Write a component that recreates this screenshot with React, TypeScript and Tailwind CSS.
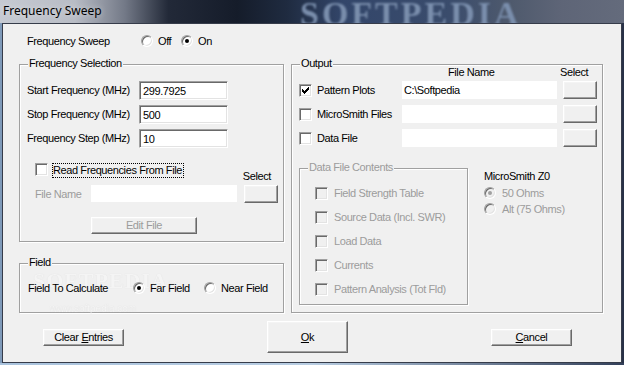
import React from "react";

const sunken =
  "border border-t-[#a0a0a0] border-l-[#a0a0a0] border-r-white border-b-white shadow-[inset_1px_1px_0_#696969,inset_-1px_-1px_0_#e3e3e3]";
const raised =
  "border border-t-white border-l-white border-r-[#696969] border-b-[#696969] shadow-[inset_-1px_-1px_0_#a0a0a0,inset_1px_1px_0_#f4f4f4] bg-[#f0f0f0]";
const grayText = "text-[#9c9c9c]";

function Check({ checked = false, disabled = false }: { checked?: boolean; disabled?: boolean }) {
  return (
    <span
      className={`inline-flex shrink-0 w-[13px] h-[13px] items-center justify-center ${sunken} ${
        disabled ? "bg-[#f0f0f0]" : "bg-white"
      }`}
    >
      {checked && (
        <svg width="7" height="7" viewBox="0 0 7 7" shapeRendering="crispEdges">
          <path d="M0 2h1v3h-1zM1 3h1v3h-1zM2 4h1v3h-1zM3 3h1v3h-1zM4 2h1v3h-1zM5 1h1v3h-1zM6 0h1v3h-1z" fill="#000" />
        </svg>
      )}
    </span>
  );
}

function Radio({ checked = false, disabled = false }: { checked?: boolean; disabled?: boolean }) {
  return (
    <span
      className={`inline-flex shrink-0 w-[12px] h-[12px] rounded-full items-center justify-center border border-t-[#a0a0a0] border-l-[#a0a0a0] border-r-white border-b-white shadow-[inset_1px_1px_0_#696969,inset_-1px_-1px_0_#e3e3e3] ${
        disabled ? "bg-[#f0f0f0]" : "bg-white"
      }`}
    >
      {checked && (
        <span className={`w-[4px] h-[4px] rounded-full ${disabled ? "bg-[#a0a0a0]" : "bg-black"}`} />
      )}
    </span>
  );
}

function Group({
  label,
  className = "",
  children,
  disabled = false,
}: {
  label: string;
  className?: string;
  children?: React.ReactNode;
  disabled?: boolean;
}) {
  return (
    <div
      className={`relative border border-[#a0a0a0] shadow-[1px_1px_0_#ffffff,inset_1px_1px_0_#ffffff] ${className}`}
    >
      <span
        className={`absolute -top-[8px] left-[8px] bg-[#f0f0f0] px-[1px] leading-[13px] ${disabled ? grayText : ""}`}
      >
        {label}
      </span>
      {children}
    </div>
  );
}

export default function App() {
  return (
    <div className="w-[624px] h-[365px] overflow-hidden flex flex-col bg-[#a9bfd6] font-['Liberation_Sans',Arial,sans-serif] text-[11px] tracking-[-0.4px] leading-[13px] text-black">
      {/* Title bar */}
      <div className="relative h-[23px] shrink-0 overflow-hidden bg-[linear-gradient(90deg,#c6cad2_0%,#b8bcc5_12%,#737987_20%,#222938_27%,#151c2a_38%,#1f2b40_46%,#33466a_55%,#3a4c6c_72%,#4f5a6d_82%,#5e6577_90%,#646b7c_100%)]">
        <span className="absolute left-[300px] -top-[5px] font-['Liberation_Serif',serif] font-bold text-[34px] leading-[38px] tracking-[3px] text-[#7a8eac] blur-[1.2px]">
          SOFTPEDIA
        </span>
        <div className="relative flex h-full items-center pl-[3px] pb-[2px] font-['Noto_Sans',sans-serif] text-[12px] tracking-normal text-black [text-shadow:0_0_6px_rgba(255,255,255,0.6)]">
          Frequency Sweep
        </div>
      </div>

      <div className="flex h-[340px] shrink-0">
        <div className="w-[2px] bg-[#7f9ab9]" />
        <div className="w-[620px] h-[340px] border border-[#363c4a] bg-[#f0f0f0] flex flex-col">
          {/* Top row */}
          <div className="mt-[9px] h-[16px] flex items-center pl-[24px]">
            <span className="w-[114px]">Frequency Sweep</span>
            <div className="w-[40px] flex items-center">
              <Radio />
              <span className="ml-[5px]">Off</span>
            </div>
            <div className="flex items-center">
              <Radio checked />
              <span className="ml-[5px]">On</span>
            </div>
          </div>

          {/* Main area */}
          <div className="mt-[15px] flex pl-[16px] gap-[7px]">
            {/* Left column */}
            <div className="w-[265px] flex flex-col">
              <Group label="Frequency Selection" className="h-[178px] pt-[16px] pl-[7px]">
                {[
                  ["Start Frequency (MHz)", "299.7925"],
                  ["Stop Frequency (MHz)", "500"],
                  ["Frequency Step (MHz)", "10"],
                ].map(([l, v], i) => (
                  <div key={l} className={`flex items-center h-[19px] ${i > 0 ? "mt-[5px]" : ""}`}>
                    <span className="w-[112px]">{l}</span>
                    <div className={`w-[89px] h-[19px] bg-white flex items-center pl-[3px] pt-[2px] ${sunken}`}>
                      {v}
                    </div>
                  </div>
                ))}
                <div className="mt-[15px] h-[20px] flex items-start">
                  <div className="ml-[8px] flex items-start">
                    <Check />
                    <span className="ml-[4px] border border-dotted border-black h-[15px] leading-[13px] pr-[1px]">
                      Read Frequencies From File
                    </span>
                  </div>
                  <span className="ml-auto mr-[12px] self-end">Select</span>
                </div>
                <div className="mt-[2px] h-[18px] flex items-start">
                  <span className={`ml-[8px] w-[56px] self-center ${grayText}`}>File Name</span>
                  <div className="w-[146px] h-[17px] bg-white" />
                  <div className={`ml-[7px] w-[34px] h-[18px] ${raised}`} />
                </div>
                <div className={`mt-[14px] ml-[64px] w-[106px] h-[17px] flex items-center justify-center ${raised} ${grayText}`}>
                  Edit File
                </div>
              </Group>

              <Group label="Field" className="mt-[21px] h-[50px] pt-[16px] pl-[8px]">
                <span className="absolute left-[13px] top-[5px] font-['Liberation_Serif',serif] font-bold text-[22px] leading-[24px] tracking-[1px] text-[#f9f9f9] opacity-50 [text-shadow:0_0_1px_#c4c4c4]">
                  SOFTPEDIA<sup className="text-[7px] font-normal">TM</sup>
                </span>
                <span className="absolute left-[30px] top-[38px] text-[10px] tracking-normal text-[#f9f9f9] opacity-60 [text-shadow:0_0_1px_#c4c4c4]">
                  www.softpedia.com
                </span>
                <div className="relative z-10 h-[16px] flex items-center">
                  <span className="w-[105px]">Field To Calculate</span>
                  <div className="w-[71px] flex items-center">
                    <Radio checked />
                    <span className="ml-[5px]">Far Field</span>
                  </div>
                  <div className="flex items-center">
                    <Radio />
                    <span className="ml-[5px]">Near Field</span>
                  </div>
                </div>
              </Group>
            </div>

            {/* Right column */}
            <Group label="Output" className="w-[312px] h-[249px] flex flex-col">
              <div className="mt-[1px] h-[13px] flex pl-[156px]">
                <span className="w-[112px]">File Name</span>
                <span>Select</span>
              </div>
              {[
                ["Pattern Plots", "C:\\Softpedia", true],
                ["MicroSmith Files", "", false],
                ["Data File", "", false],
              ].map(([l, v, c], i) => (
                <div
                  key={l as string}
                  className={`flex items-center h-[18px] pl-[7px] ${i === 0 ? "mt-[2px]" : "mt-[6px]"}`}
                >
                  <div className="w-[103px] flex items-center">
                    <Check checked={c as boolean} />
                    <span className="ml-[5px]">{l as string}</span>
                  </div>
                  <div className="w-[155px] h-[18px] bg-white flex items-center pl-[2px]">{v as string}</div>
                  <div className={`ml-[6px] w-[34px] h-[18px] ${raised}`} />
                </div>
              ))}
              <div className="mt-[21px] flex pl-[7px]">
                <Group label="Data File Contents" disabled className="w-[169px] h-[137px] pt-[16px] pl-[15px] flex flex-col gap-[8px]">
                  {[
                    "Field Strength Table",
                    "Source Data (Incl. SWR)",
                    "Load Data",
                    "Currents",
                    "Pattern Analysis (Tot Fld)",
                  ].map((t) => (
                    <div key={t} className="h-[16px] flex items-center">
                      <Check disabled />
                      <span className={`ml-[6px] ${grayText}`}>{t}</span>
                    </div>
                  ))}
                </Group>
                <div className="ml-[16px] flex flex-col">
                  <span className="mt-[2px]">MicroSmith Z0</span>
                  <div className="mt-[2px] h-[16px] flex items-center">
                    <Radio checked disabled />
                    <span className={`ml-[6px] ${grayText}`}>50 Ohms</span>
                  </div>
                  <div className="h-[16px] flex items-center">
                    <Radio disabled />
                    <span className={`ml-[6px] ${grayText}`}>Alt (75 Ohms)</span>
                  </div>
                </div>
              </div>
            </Group>
          </div>

          {/* Bottom buttons */}
          <div className="mt-[8px] h-[32px] flex items-center">
            <div className={`ml-[40px] w-[81px] h-[17px] flex items-center justify-center ${raised}`}>
              Clear <span className="underline ml-[3px]">E</span>ntries
            </div>
            <div className={`ml-[143px] w-[81px] h-[32px] flex items-center justify-center ${raised}`}>
              <span className="underline">O</span>k
            </div>
            <div className={`ml-[143px] w-[81px] h-[17px] flex items-center justify-center ${raised}`}>
              <span className="underline">C</span>ancel
            </div>
          </div>
        </div>
        <div className="w-[2px] bg-[#283147]" />
      </div>
      <div className="h-[2px] bg-[linear-gradient(90deg,#a9c3dd_0%,#b8cde2_50%,#33405a_100%)]" />
    </div>
  );
}
